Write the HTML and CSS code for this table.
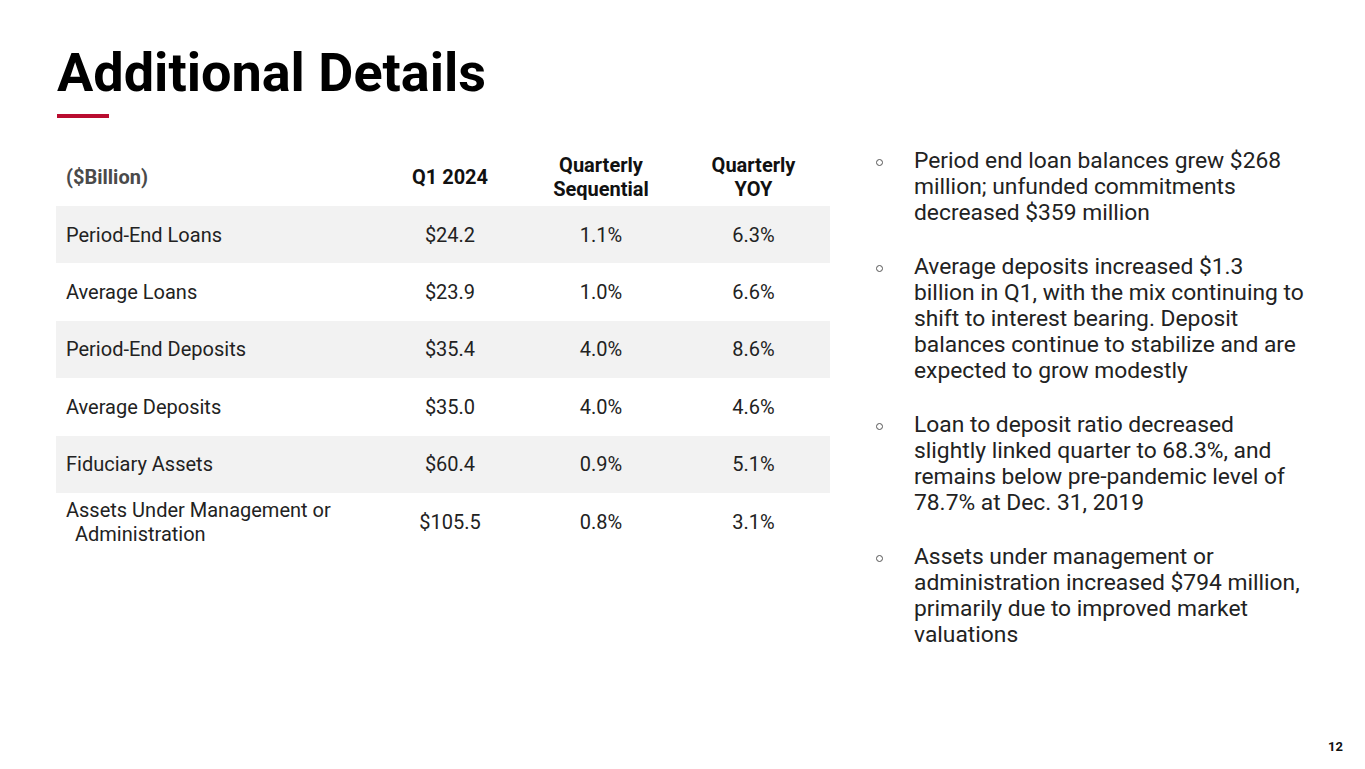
FILE: index.html
```html
<!DOCTYPE html>
<html lang="en">
<head>
<meta charset="utf-8">
<title>Additional Details</title>
<link rel="stylesheet" href="styles.css">
</head>
<body>
<div class="slide">
  <header class="head">
    <h1 class="title">Additional Details</h1>
    <div class="accent"></div>
  </header>
  <main class="content">
    <div class="table">
      <div class="row hdr">
        <div class="cell label unit">($Billion)</div>
        <div class="cell num">Q1 2024</div>
        <div class="cell num">Quarterly<br>Sequential</div>
        <div class="cell num">Quarterly<br>YOY</div>
      </div>
      <div class="row shade">
        <div class="cell label">Period-End Loans</div>
        <div class="cell num">$24.2</div>
        <div class="cell num">1.1%</div>
        <div class="cell num">6.3%</div>
      </div>
      <div class="row">
        <div class="cell label">Average Loans</div>
        <div class="cell num">$23.9</div>
        <div class="cell num">1.0%</div>
        <div class="cell num">6.6%</div>
      </div>
      <div class="row shade">
        <div class="cell label">Period-End Deposits</div>
        <div class="cell num">$35.4</div>
        <div class="cell num">4.0%</div>
        <div class="cell num">8.6%</div>
      </div>
      <div class="row">
        <div class="cell label">Average Deposits</div>
        <div class="cell num">$35.0</div>
        <div class="cell num">4.0%</div>
        <div class="cell num">4.6%</div>
      </div>
      <div class="row shade">
        <div class="cell label">Fiduciary Assets</div>
        <div class="cell num">$60.4</div>
        <div class="cell num">0.9%</div>
        <div class="cell num">5.1%</div>
      </div>
      <div class="row">
        <div class="cell label wrap">Assets Under Management or Administration</div>
        <div class="cell num">$105.5</div>
        <div class="cell num">0.8%</div>
        <div class="cell num">3.1%</div>
      </div>
    </div>
    <ul class="notes">
      <li>Period end loan balances grew $268 million; unfunded commitments decreased $359 million</li>
      <li>Average deposits increased $1.3 billion in Q1, with the mix continuing to shift to interest bearing. Deposit balances continue to stabilize and are expected to grow modestly</li>
      <li>Loan to deposit ratio decreased slightly linked quarter to 68.3%, and remains below pre-pandemic level of 78.7% at Dec. 31, 2019</li>
      <li>Assets under management or administration increased $794 million, primarily due to improved market valuations</li>
    </ul>
  </main>
  <footer class="foot">12</footer>
</div>
</body>
</html>
```

FILE: styles.css
```css
* { box-sizing: border-box; }
html, body { margin: 0; padding: 0; background: #fff; }
body { font-family: Roboto, "Liberation Sans", Arial, sans-serif; color: #222; }

.slide {
  width: 1365px;
  height: 769px;
  display: flex;
  flex-direction: column;
  overflow: hidden;
}

.head { padding: 45px 0 0 57px; }
.title {
  margin: 0;
  font-size: 54px;
  line-height: 55px;
  font-weight: 700;
  color: #000;
  letter-spacing: 0;
}
.accent {
  width: 52px;
  height: 4px;
  margin-top: 14px;
  background: #b90c2f;
}

.content {
  display: flex;
  align-items: flex-start;
  padding: 30px 0 0 56px;
  gap: 42px;
}

.table { width: 774px; font-size: 20px; line-height: 24px; flex: none; }
.row {
  display: grid;
  grid-template-columns: 319px 150px 152px 1fr;
  height: 57.4px;
  align-items: center;
}
.row.hdr { height: 58px; font-weight: 700; color: #111; }
.row.shade { background: #f2f2f2; }
.cell.label { padding-left: 10px; }
.cell.unit { color: #4a4a4a; }
.cell.num { text-align: center; }
.cell.wrap { padding-left: 19px; text-indent: -9px; }

.notes {
  list-style: none;
  margin: 0;
  padding: 0;
  font-size: 22.8px;
  line-height: 26px;
  color: #222;
}
.notes li {
  position: relative;
  padding-left: 42px;
  width: 434px;
  margin-bottom: 28px;
}
.notes li::before {
  content: "";
  position: absolute;
  left: 4px;
  top: 11px;
  width: 5px;
  height: 5px;
  border: 1px solid #555;
  border-radius: 50%;
}

.foot {
  margin-top: auto;
  padding: 0 22px 14px 0;
  text-align: right;
  font-size: 13px;
  font-weight: 700;
  line-height: 16px;
  color: #111;
}
```
